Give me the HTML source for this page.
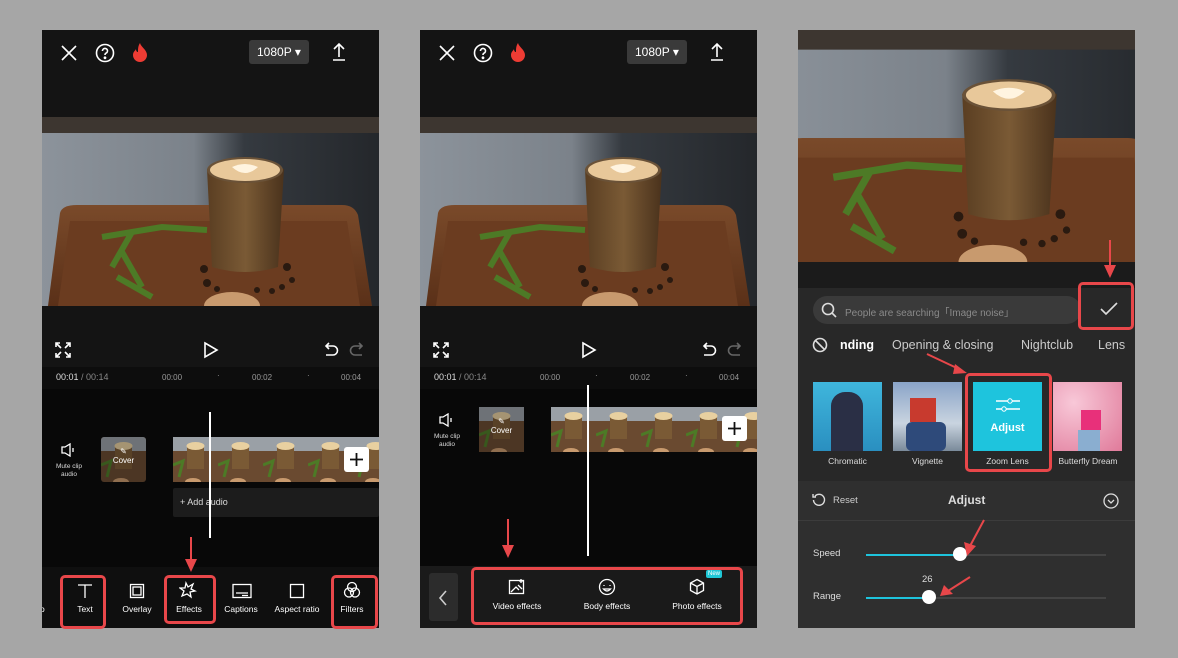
<!DOCTYPE html>
<html><head><meta charset="utf-8"><style>
*{margin:0;padding:0;box-sizing:border-box}
body{width:1178px;height:658px;background:#a6a6a6;position:relative;overflow:hidden;font-family:"Liberation Sans",sans-serif;color:#fff}
.p{position:absolute;top:30px;width:337px;height:598px;background:#141414;overflow:hidden}
.a{position:absolute}
.t{position:absolute;white-space:nowrap}
.red{position:absolute;border:3px solid #e8474a;border-radius:5px}
.ic{position:absolute;stroke:#fff;fill:none;stroke-width:1.6}
</style></head><body>
<svg width="0" height="0" style="position:absolute">
<defs>
<linearGradient id="wall" x1="0" x2="1" y1="0" y2="0"><stop offset="0" stop-color="#8c939b"/><stop offset=".45" stop-color="#7b828a"/><stop offset=".6" stop-color="#353a40"/><stop offset="1" stop-color="#24272b"/></linearGradient>
<linearGradient id="tray" x1="0" x2="0" y1="0" y2="1"><stop offset="0" stop-color="#7a4a2a"/><stop offset="1" stop-color="#5a3018"/></linearGradient>
<linearGradient id="glass" x1="0" x2="1"><stop offset="0" stop-color="#5a3e22"/><stop offset=".5" stop-color="#7a5a35"/><stop offset="1" stop-color="#4a321c"/></linearGradient>
<symbol id="photo" viewBox="0 0 337 189">
<rect width="337" height="189" fill="url(#wall)"/>
<rect width="337" height="16" fill="#3d3630"/>
<path d="M18 96 Q20 88 35 88 L300 88 Q312 88 316 98 L330 189 L6 189 Z" fill="url(#tray)"/>
<path d="M28 104 L305 104 L318 189 L16 189Z" fill="#6b3c20"/>
<path d="M60 120 L120 110 L165 113 M90 115 L70 150 M80 135 L100 170 M75 160 L110 180" stroke="#4d7a26" stroke-width="6" fill="none"/>
<ellipse cx="190" cy="189" rx="28" ry="14" fill="#c89a6e"/>
<path d="M165 52 L242 52 L236 150 Q203 160 170 150 Z" fill="url(#glass)"/>
<ellipse cx="203" cy="53" rx="38" ry="13" fill="#6a5238"/>
<ellipse cx="203" cy="53" rx="35" ry="11" fill="#e8c89a"/>
<path d="M190 50 Q203 62 216 50 Q203 44 190 50Z" fill="#fff4e0"/>
<g fill="#2a1a10"><circle cx="162" cy="152" r="4"/><circle cx="165" cy="166" r="4"/><circle cx="175" cy="172" r="3"/><circle cx="245" cy="150" r="4"/><circle cx="250" cy="163" r="3"/><circle cx="240" cy="170" r="3"/><circle cx="215" cy="173" r="3"/><circle cx="230" cy="174" r="3"/></g>
</symbol>
<symbol id="thumb" viewBox="0 0 45 45">
<rect width="45" height="45" fill="#6a4a30"/><rect width="45" height="14" fill="#9aa0a6"/>
<rect x="14" y="8" width="17" height="24" fill="#7a5a35"/><ellipse cx="22.5" cy="9" rx="9" ry="4" fill="#e8d0a0"/>
<path d="M0 28 L10 24 L6 40" stroke="#4d7a26" stroke-width="3" fill="none"/><ellipse cx="20" cy="45" rx="8" ry="4" fill="#c89a6e"/>
</symbol>
</defs></svg>

<!-- PANEL 1 -->
<div class="p" style="left:42px">
 <svg class="ic" style="left:18px;top:14px" width="18" height="18"><path d="M2 2L16 16M16 2L2 16"/></svg>
 <svg class="ic" style="left:53px;top:13px" width="20" height="20"><circle cx="10" cy="10" r="8.5"/><path d="M7.5 8a2.5 2.5 0 1 1 3.5 2.2c-.8.4-1 1-1 1.8" /><circle cx="10" cy="14.8" r=".6" fill="#fff"/></svg>
 <svg class="a" style="left:90px;top:12px" width="16" height="20"><path d="M8 1C9 5 15 8 15 13a7 7 0 0 1-14 0c0-3 2-4 3-6 0 2 1 3 2 3C6 7 6 4 8 1Z" fill="#ee3c34"/></svg>
 <div class="a" style="left:207px;top:10px;width:60px;height:24px;background:#3a3a3a;border-radius:3px"></div>
 <div class="t" style="left:215px;top:15px;font-size:12px">1080P ▾</div>
 <svg class="ic" style="left:289px;top:12px" width="16" height="20"><path d="M8 15V2M3 7L8 2L13 7M2 18H14"/></svg>
 <svg class="a" style="left:0;top:87px" width="337" height="189"><use href="#photo"/></svg>
 <svg class="ic" style="left:13px;top:312px" width="16" height="16"><path d="M1 5V1H5M11 1H15V5M15 11V15H11M5 15H1V11M1 1L6 6M15 1L10 6M15 15L10 10M1 15L6 10"/></svg>
 <svg class="ic" style="left:161px;top:311px" width="16" height="18"><path d="M2 2L14 9L2 16Z"/></svg>
 <svg class="ic" style="left:281px;top:312px" width="16" height="16"><path d="M4 4H10A4 4 0 0 1 10 13H3M6 1L3 4L6 7"/></svg>
 <svg class="ic" style="left:307px;top:312px;stroke:#666" width="16" height="16"><path d="M12 4H6A4 4 0 0 0 6 13H13M10 1L13 4L10 7"/></svg>
 <div class="a" style="left:0;top:337px;width:337px;height:22px;background:#0d0d0d"></div>
 <div class="t" style="left:14px;top:342px;font-size:9px;color:#ddd">00:01 <span style="color:#888">/ 00:14</span></div>
 <div class="t" style="left:120px;top:343px;font-size:8px;color:#999">00:00</div>
 <div class="t" style="left:175px;top:341px;font-size:8px;color:#999">·</div>
 <div class="t" style="left:210px;top:343px;font-size:8px;color:#999">00:02</div>
 <div class="t" style="left:265px;top:341px;font-size:8px;color:#999">·</div>
 <div class="t" style="left:299px;top:343px;font-size:8px;color:#999">00:04</div>
 <div class="a" style="left:0;top:359px;width:337px;height:178px;background:#080808"></div>
 <svg class="ic" style="left:19px;top:413px;stroke-width:1.3" width="16" height="14"><path d="M1 4H4L9 1V13L4 10H1Z M12 5V9"/></svg>
 <div class="t" style="left:8px;top:433px;width:38px;text-align:center;font-size:6.5px;line-height:8px;color:#ddd;white-space:normal">Mute clip audio</div>
 <svg class="a" style="left:59px;top:407px;border-radius:3px;opacity:.7" width="45" height="45"><use href="#thumb"/></svg>
 <div class="t" style="left:59px;top:417px;width:45px;text-align:center;font-size:8px">✎<br>Cover</div>
 <svg class="a" style="left:131px;top:407px" width="206" height="45">
  <use href="#thumb" x="0" width="45" height="45"/><use href="#thumb" x="45" width="45" height="45"/><use href="#thumb" x="90" width="45" height="45"/><use href="#thumb" x="135" width="45" height="45"/><use href="#thumb" x="180" width="45" height="45"/></svg>
 <div class="a" style="left:302px;top:417px;width:25px;height:25px;background:#fff;border-radius:3px"></div>
 <svg class="a" style="left:307px;top:422px" width="15" height="15"><path d="M7.5 1V14M1 7.5H14" stroke="#111" stroke-width="1.8"/></svg>
 <div class="a" style="left:131px;top:458px;width:206px;height:29px;background:#1c1c1c;border-radius:2px"></div>
 <div class="t" style="left:138px;top:467px;font-size:9px;color:#ddd">+ Add audio</div>
 <div class="a" style="left:167px;top:382px;width:2px;height:126px;background:#fff"></div>
 <div class="a" style="left:0;top:537px;width:337px;height:61px;background:#0f0f0f"></div>
 <svg class="ic" style="left:35px;top:553px;stroke-width:1.3" width="16" height="16"><path d="M1 2H15M8 2V15"/></svg>
 <div class="t" style="left:27px;top:574px;width:32px;text-align:center;font-size:8.5px">Text</div>
 <svg class="ic" style="left:87px;top:553px;stroke-width:1.3" width="16" height="16"><rect x="1.5" y="1.5" width="13" height="13"/><rect x="4" y="4" width="8" height="8"/></svg>
 <div class="t" style="left:75px;top:574px;width:40px;text-align:center;font-size:8.5px">Overlay</div>
 <svg class="ic" style="left:137px;top:551px;stroke-width:1.3" width="18" height="18"><path d="M7 2L9 6L14 3L12 8L16 10L11 11L12 16L8 13L3 15L5 10L1 7L6 7Z"/></svg>
 <div class="t" style="left:127px;top:574px;width:40px;text-align:center;font-size:8.5px">Effects</div>
 <svg class="ic" style="left:190px;top:553px;stroke-width:1.3" width="20" height="16"><rect x="1" y="1.5" width="18" height="13"/><path d="M4 10H16M10 12.5H16"/></svg>
 <div class="t" style="left:177px;top:574px;width:44px;text-align:center;font-size:8.5px">Captions</div>
 <svg class="ic" style="left:247px;top:553px;stroke-width:1.3" width="16" height="16"><rect x="1.5" y="1.5" width="13" height="13"/></svg>
 <div class="t" style="left:225px;top:574px;width:60px;text-align:center;font-size:8.5px">Aspect ratio</div>
 <svg class="ic" style="left:301px;top:551px;stroke-width:1.3" width="18" height="18"><circle cx="9" cy="6" r="4.5"/><circle cx="6" cy="11.5" r="4.5"/><circle cx="12" cy="11.5" r="4.5"/></svg>
 <div class="t" style="left:290px;top:574px;width:40px;text-align:center;font-size:8.5px">Filters</div>
 <div class="t" style="left:-2px;top:574px;font-size:8.5px">o</div>
</div>
<div class="red" style="left:60px;top:575px;width:46px;height:54px"></div>
<div class="red" style="left:164px;top:575px;width:52px;height:49px"></div>
<div class="red" style="left:331px;top:575px;width:47px;height:54px"></div>
<svg class="a" style="left:184px;top:537px" width="14" height="36"><path d="M7 0V26" stroke="#e8474a" stroke-width="2"/><path d="M1 22L7 35L13 22Z" fill="#e8474a"/></svg>

<!-- PANEL 2 -->
<div class="p" style="left:420px">
 <svg class="ic" style="left:18px;top:14px" width="18" height="18"><path d="M2 2L16 16M16 2L2 16"/></svg>
 <svg class="ic" style="left:53px;top:13px" width="20" height="20"><circle cx="10" cy="10" r="8.5"/><path d="M7.5 8a2.5 2.5 0 1 1 3.5 2.2c-.8.4-1 1-1 1.8" /><circle cx="10" cy="14.8" r=".6" fill="#fff"/></svg>
 <svg class="a" style="left:90px;top:12px" width="16" height="20"><path d="M8 1C9 5 15 8 15 13a7 7 0 0 1-14 0c0-3 2-4 3-6 0 2 1 3 2 3C6 7 6 4 8 1Z" fill="#ee3c34"/></svg>
 <div class="a" style="left:207px;top:10px;width:60px;height:24px;background:#3a3a3a;border-radius:3px"></div>
 <div class="t" style="left:215px;top:15px;font-size:12px">1080P ▾</div>
 <svg class="ic" style="left:289px;top:12px" width="16" height="20"><path d="M8 15V2M3 7L8 2L13 7M2 18H14"/></svg>
 <svg class="a" style="left:0;top:87px" width="337" height="189"><use href="#photo"/></svg>
 <svg class="ic" style="left:13px;top:312px" width="16" height="16"><path d="M1 5V1H5M11 1H15V5M15 11V15H11M5 15H1V11M1 1L6 6M15 1L10 6M15 15L10 10M1 15L6 10"/></svg>
 <svg class="ic" style="left:161px;top:311px" width="16" height="18"><path d="M2 2L14 9L2 16Z"/></svg>
 <svg class="ic" style="left:281px;top:312px" width="16" height="16"><path d="M4 4H10A4 4 0 0 1 10 13H3M6 1L3 4L6 7"/></svg>
 <svg class="ic" style="left:307px;top:312px;stroke:#666" width="16" height="16"><path d="M12 4H6A4 4 0 0 0 6 13H13M10 1L13 4L10 7"/></svg>
 <div class="a" style="left:0;top:337px;width:337px;height:22px;background:#0d0d0d"></div>
 <div class="t" style="left:14px;top:342px;font-size:9px;color:#ddd">00:01 <span style="color:#888">/ 00:14</span></div>
 <div class="t" style="left:120px;top:343px;font-size:8px;color:#999">00:00</div>
 <div class="t" style="left:175px;top:341px;font-size:8px;color:#999">·</div>
 <div class="t" style="left:210px;top:343px;font-size:8px;color:#999">00:02</div>
 <div class="t" style="left:265px;top:341px;font-size:8px;color:#999">·</div>
 <div class="t" style="left:299px;top:343px;font-size:8px;color:#999">00:04</div>
 <div class="a" style="left:0;top:359px;width:337px;height:177px;background:#080808"></div>
 <svg class="ic" style="left:19px;top:383px;stroke-width:1.3" width="16" height="14"><path d="M1 4H4L9 1V13L4 10H1Z M12 5V9"/></svg>
 <div class="t" style="left:8px;top:403px;width:38px;text-align:center;font-size:6.5px;line-height:8px;color:#ddd;white-space:normal">Mute clip audio</div>
 <svg class="a" style="left:59px;top:377px;opacity:.7" width="45" height="45"><use href="#thumb"/></svg>
 <div class="t" style="left:59px;top:387px;width:45px;text-align:center;font-size:8px">✎<br>Cover</div>
 <svg class="a" style="left:131px;top:377px" width="206" height="45">
  <use href="#thumb" x="0" width="45" height="45"/><use href="#thumb" x="45" width="45" height="45"/><use href="#thumb" x="90" width="45" height="45"/><use href="#thumb" x="135" width="45" height="45"/><use href="#thumb" x="180" width="45" height="45"/></svg>
 <div class="a" style="left:302px;top:386px;width:25px;height:25px;background:#fff;border-radius:3px"></div>
 <svg class="a" style="left:307px;top:391px" width="15" height="15"><path d="M7.5 1V14M1 7.5H14" stroke="#111" stroke-width="1.8"/></svg>
 <div class="a" style="left:167px;top:355px;width:2px;height:171px;background:#fff"></div>
 <div class="a" style="left:0;top:536px;width:337px;height:62px;background:#1a1a1a"></div>
 <div class="a" style="left:9px;top:543px;width:29px;height:48px;background:#2c2c2c;border-radius:3px"></div>
 <svg class="ic" style="left:18px;top:560px;stroke:#ccc" width="10" height="16"><path d="M8 1L2 8L8 15"/></svg>
 <svg class="ic" style="left:88px;top:548px;stroke-width:1.3" width="18" height="18"><rect x="1.5" y="2.5" width="14" height="13"/><path d="M3 14L8 9L11 12M10 7L14 11M13 1V5M11 3H15"/></svg>
 <div class="t" style="left:62px;top:571px;width:70px;text-align:center;font-size:8.5px">Video effects</div>
 <svg class="ic" style="left:178px;top:548px;stroke-width:1.3" width="18" height="18"><circle cx="9" cy="9" r="7.5"/><path d="M6 7V8M12 7V8M5.5 11Q9 15 12.5 11Z"/></svg>
 <div class="t" style="left:152px;top:571px;width:70px;text-align:center;font-size:8.5px">Body effects</div>
 <svg class="ic" style="left:268px;top:548px;stroke-width:1.3" width="18" height="18"><path d="M9 1.5L15.5 5V12.5L9 16L2.5 12.5V5Z M2.5 5L9 8.5L15.5 5M9 8.5V16"/></svg>
 <div class="a" style="left:286px;top:540px;width:16px;height:8px;background:#1fc7d6;border-radius:2px;font-size:6px;line-height:8px;text-align:center">New</div>
 <div class="t" style="left:242px;top:571px;width:70px;text-align:center;font-size:8.5px">Photo effects</div>
</div>
<div class="red" style="left:471px;top:567px;width:272px;height:58px"></div>
<svg class="a" style="left:501px;top:519px" width="14" height="40"><path d="M7 0V30" stroke="#e8474a" stroke-width="2"/><path d="M1 26L7 39L13 26Z" fill="#e8474a"/></svg>

<!-- PANEL 3 -->
<div class="p" style="left:798px;background:#282828">
 <svg class="a" style="left:0;top:0" width="337" height="232" viewBox="31 0 275 189" preserveAspectRatio="xMidYMid slice"><use href="#photo" width="337" height="189"/></svg>
 <div class="a" style="left:0;top:232px;width:337px;height:26px;background:#1b1b1b"></div>
 <div class="a" style="left:15px;top:266px;width:268px;height:28px;background:#3a3a3a;border-radius:14px"></div>
 <svg class="ic" style="left:23px;top:272px;stroke:#ddd" width="16" height="16"><circle cx="7" cy="7" r="5.5"/><path d="M11 11L15 15"/></svg>
 <div class="t" style="left:47px;top:274px;font-size:10px;color:#8a8a8a">People are searching「Image noise」</div>
 <svg class="ic" style="left:302px;top:272px;stroke:#ddd" width="18" height="14"><path d="M1 7L6 12L17 1"/></svg>
 <svg class="ic" style="left:14px;top:307px;stroke:#ddd" width="16" height="16"><circle cx="8" cy="8" r="6.5"/><path d="M3.5 3.5L12.5 12.5"/></svg>
 <div class="t" style="left:42px;top:308px;font-size:12.5px;font-weight:bold">nding</div>
 <div class="t" style="left:94px;top:308px;font-size:12.5px;color:#ccc">Opening &amp; closing</div>
 <div class="t" style="left:223px;top:308px;font-size:12.5px;color:#ccc">Nightclub</div>
 <div class="t" style="left:300px;top:308px;font-size:12.5px;color:#ccc">Lens</div>
 <div class="a" style="left:15px;top:352px;width:69px;height:69px;background:linear-gradient(#3fb6dc,#2a8fc0)"></div>
 <div class="a" style="left:33px;top:362px;width:32px;height:59px;background:#2a2f45;border-radius:14px 14px 0 0"></div>
 <div class="a" style="left:95px;top:352px;width:69px;height:69px;background:linear-gradient(#8aa4c8,#c9d4e0 60%,#7a8a9a)"></div>
 <div class="a" style="left:112px;top:368px;width:26px;height:24px;background:#c83a2e"></div>
 <div class="a" style="left:108px;top:392px;width:40px;height:29px;background:#2e4a7a;border-radius:6px"></div>
 <div class="a" style="left:175px;top:352px;width:69px;height:69px;background:#1ec4dd"></div>
 <svg class="a" style="left:197px;top:368px" width="26" height="14"><path d="M1 3H25M1 11H25" stroke="#fff" stroke-width="1.4"/><circle cx="15" cy="3" r="2.2" fill="#1ec4dd" stroke="#fff"/><circle cx="9" cy="11" r="2.2" fill="#1ec4dd" stroke="#fff"/></svg>
 <div class="t" style="left:175px;top:392px;width:69px;text-align:center;font-size:11px;font-weight:bold">Adjust</div>
 <div class="a" style="left:255px;top:352px;width:69px;height:69px;background:radial-gradient(circle at 30% 30%,#f8c8d8,#e07a9a)"></div>
 <div class="a" style="left:283px;top:380px;width:20px;height:20px;background:#e8307a"></div>
 <div class="a" style="left:280px;top:400px;width:22px;height:21px;background:#8aaed0"></div>
 <div class="t" style="left:15px;top:426px;width:69px;text-align:center;font-size:8.5px;color:#ddd">Chromatic</div>
 <div class="t" style="left:95px;top:426px;width:69px;text-align:center;font-size:8.5px;color:#ddd">Vignette</div>
 <div class="t" style="left:175px;top:426px;width:69px;text-align:center;font-size:8.5px;color:#ddd">Zoom Lens</div>
 <div class="t" style="left:250px;top:426px;width:80px;text-align:center;font-size:8.5px;color:#ddd">Butterfly Dream</div>
 <div class="a" style="left:0;top:451px;width:337px;height:147px;background:#2f2f2f"></div>
 <div class="a" style="left:0;top:490px;width:337px;height:1px;background:#3c3c3c"></div>
 <svg class="ic" style="left:14px;top:463px;stroke:#ddd;stroke-width:1.4" width="14" height="14"><path d="M3 3A5.5 5.5 0 1 1 1.5 7M1 1V4H4"/></svg>
 <div class="t" style="left:35px;top:465px;font-size:9.5px;color:#ccc">Reset</div>
 <div class="t" style="left:150px;top:463px;font-size:12px;font-weight:bold;color:#ddd">Adjust</div>
 <svg class="ic" style="left:305px;top:463px;stroke:#ddd;stroke-width:1.3" width="16" height="16"><circle cx="8" cy="8" r="7"/><path d="M5 7L8 10L11 7"/></svg>
 <div class="t" style="left:15px;top:518px;font-size:9.5px;color:#ddd">Speed</div>
 <div class="a" style="left:68px;top:524px;width:240px;height:2px;background:#444"></div>
 <div class="a" style="left:68px;top:524px;width:94px;height:2px;background:#1ec4dd"></div>
 <div class="a" style="left:155px;top:517px;width:14px;height:14px;background:#fff;border-radius:50%"></div>
 <div class="t" style="left:15px;top:561px;font-size:9.5px;color:#ddd">Range</div>
 <div class="a" style="left:68px;top:567px;width:240px;height:2px;background:#444"></div>
 <div class="a" style="left:68px;top:567px;width:63px;height:2px;background:#1ec4dd"></div>
 <div class="a" style="left:124px;top:560px;width:14px;height:14px;background:#fff;border-radius:50%"></div>
 <div class="t" style="left:124px;top:544px;font-size:9.5px;color:#ddd">26</div>
</div>
<div class="red" style="left:1078px;top:282px;width:56px;height:48px"></div>
<div class="red" style="left:965px;top:373px;width:87px;height:99px"></div>
<svg class="a" style="left:1103px;top:240px" width="14" height="40"><path d="M7 0V28" stroke="#e8474a" stroke-width="2"/><path d="M1 25L7 38L13 25Z" fill="#e8474a"/></svg>
<svg class="a" style="left:925px;top:352px" width="44" height="24"><path d="M2 2L36 18" stroke="#e8474a" stroke-width="2"/><path d="M30 12L42 21L28 22Z" fill="#e8474a"/></svg>
<svg class="a" style="left:962px;top:518px" width="24" height="40"><path d="M22 2L8 28" stroke="#e8474a" stroke-width="2"/><path d="M2 24L5 38L14 28Z" fill="#e8474a"/></svg>
<svg class="a" style="left:940px;top:575px" width="32" height="24"><path d="M30 2L8 16" stroke="#e8474a" stroke-width="2"/><path d="M4 10L0 21L13 19Z" fill="#e8474a"/></svg>
</body></html>
